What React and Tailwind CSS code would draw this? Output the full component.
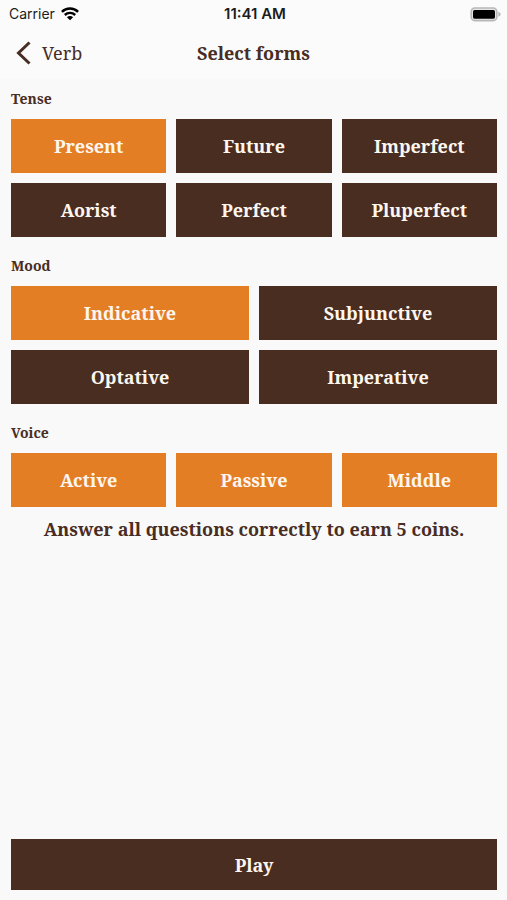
import { useState } from "react";

const GROUPS = [
  {
    title: "Tense",
    columns: "grid-cols-3",
    forms: ["Present", "Future", "Imperfect", "Aorist", "Perfect", "Pluperfect"],
  },
  {
    title: "Mood",
    columns: "grid-cols-2",
    forms: ["Indicative", "Subjunctive", "Optative", "Imperative"],
  },
  { title: "Voice", columns: "grid-cols-3", forms: ["Active", "Passive", "Middle"] },
];

function WifiIcon() {
  return (
    <svg viewBox="0 0 18 14" className="h-[14px] w-[18px]" fill="none" stroke="black" aria-hidden="true">
      <path d="M.9 4.900C5.400 .4 12.600 .4 17.100 4.900" strokeWidth="2.500" />
      <path d="M3.800 8C6.800 5.200 11.200 5.200 14.200 8" strokeWidth="2.400" />
      <path d="M9 13.300L5.900 10.200C7.700 8.600 10.300 8.600 12.100 10.200Z" fill="black" stroke="none" />
    </svg>
  );
}

function BatteryIcon() {
  return (
    <svg viewBox="0 0 31 15" className="h-[15px] w-[31px]" aria-hidden="true">
      <rect x="1.200" y="1" width="25.600" height="12.600" rx="3.600" fill="#e4e4e4" stroke="#b8b8b8" strokeWidth="1.600" />
      <rect x="3" y="2.900" width="22" height="8.800" rx="1.600" fill="black" />
      <path d="M28.300 4.800v5c1.400-.5 2.400-1.400 2.400-2.500s-1-2-2.400-2.500z" fill="#b8b8b8" />
    </svg>
  );
}

function FormGroup({ title, columns, forms, selected, onToggle }) {
  return (
    <section aria-label={title}>
      <h2 className="mb-[10px] text-[14px] leading-5 font-bold">{title}</h2>
      <div className={"grid gap-[10px] " + columns}>
        {forms.map((form) => (
          <button
            key={form}
            type="button"
            aria-pressed={selected.includes(form)}
            onClick={() => onToggle(form)}
            className={
              "h-[54px] text-[18px] leading-6 font-bold text-[#fdf6ee] " +
              (selected.includes(form) ? "bg-[#e47e25]" : "bg-[#482d20]")
            }
          >
            {form}
          </button>
        ))}
      </div>
    </section>
  );
}

export default function App() {
  const [selected, setSelected] = useState(["Present", "Indicative", "Active", "Passive", "Middle"]);
  const toggle = (form) =>
    setSelected((now) => (now.includes(form) ? now.filter((f) => f !== form) : [...now, form]));

  return (
    <div className="flex min-h-screen flex-col bg-[#f9f9f9] font-['Noto_Serif','Droid_Serif','DejaVu_Serif_Condensed','DejaVu_Serif',serif] text-[#482d24]">
      <div className="bg-[#fbfbfb]">
        <div className="grid h-7 grid-cols-3 items-center pr-[6px] pl-[9px] font-[Inter,'Liberation_Sans',sans-serif] text-[14px] leading-5 text-[#1c1c1c]">
          <div className="flex items-center gap-[6px]">
            <span>Carrier</span>
            <WifiIcon />
          </div>
          <span className="text-center text-[15px] font-semibold">11:41 AM</span>
          <div className="flex justify-end">
            <BatteryIcon />
          </div>
        </div>
        <header className="grid h-[51px] grid-cols-3 items-center px-4 pb-[2px]">
          <a href="#verb" className="flex items-center gap-[11px] text-[18px] leading-6">
            <svg viewBox="0 0 15 24" className="h-6 w-[15px]" fill="none" stroke="currentColor" strokeWidth="3" aria-hidden="true">
              <path d="M13.500 1.500L2.500 12L13.500 22.500" />
            </svg>
            Verb
          </a>
          <h1 className="text-center text-[18px] leading-6 font-bold whitespace-nowrap">Select forms</h1>
        </header>
      </div>
      <main className="flex grow flex-col pt-[10px] pr-[10px] pb-[10px] pl-[11px]">
        <div className="flex flex-col gap-[19px]">
          {GROUPS.map((group) => (
            <FormGroup key={group.title} {...group} selected={selected} onToggle={toggle} />
          ))}
        </div>
        <p className="mt-[10px] text-center text-[18px] leading-6 font-bold">
          Answer all questions correctly to earn 5 coins.
        </p>
        <button type="button" className="mt-auto h-[51px] bg-[#482d20] text-[18px] leading-6 font-bold text-[#fdf6ee]">
          Play
        </button>
      </main>
    </div>
  );
}
